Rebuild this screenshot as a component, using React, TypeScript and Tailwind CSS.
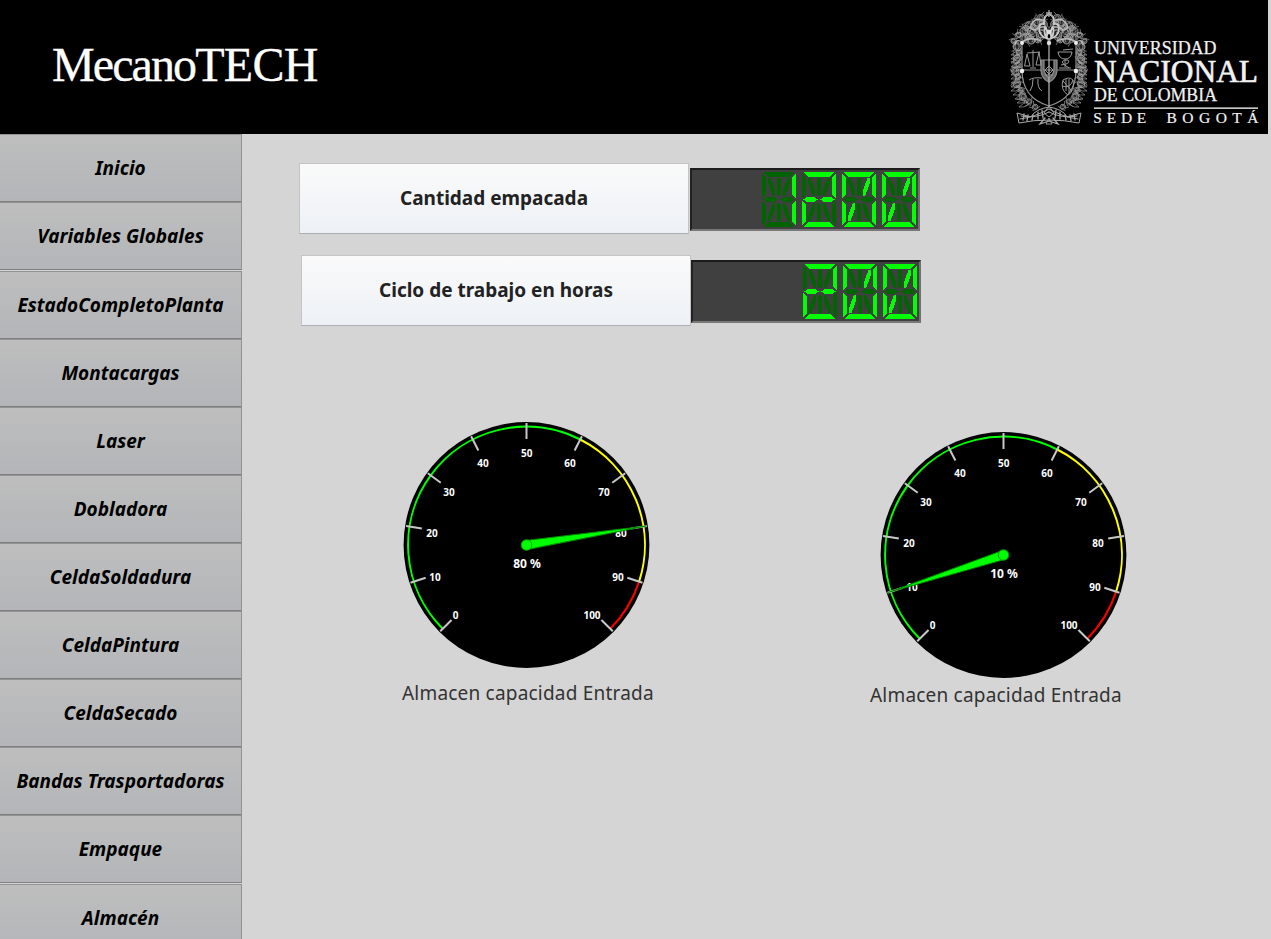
import React from 'react';

const sans = "font-['Noto_Sans','Open_Sans',sans-serif]";

const menu = [
  { label: 'Inicio', gap: false },
  { label: 'Variables Globales', gap: false },
  { label: 'EstadoCompletoPlanta', gap: true },
  { label: 'Montacargas', gap: false },
  { label: 'Laser', gap: false },
  { label: 'Dobladora', gap: false },
  { label: 'CeldaSoldadura', gap: false },
  { label: 'CeldaPintura', gap: false },
  { label: 'CeldaSecado', gap: false },
  { label: 'Bandas Trasportadoras', gap: false },
  { label: 'Empaque', gap: false },
  { label: 'Almacén', gap: true },
];

/* Sixteen-segment style digit shapes on a 34 x 55 cell */
const segments: Record<string, string> = {
  top: '2,0 32,0 28,4.6 6,4.6',
  bottom: '6,50.4 28,50.4 32,55 2,55',
  leftUp: '0,1.3 4.4,6 4.4,22.5 0,26',
  leftDown: '0,29 4.4,32.5 4.4,49 0,53.7',
  rightUp: '34,1.3 29.6,6 29.6,22.5 34,26',
  rightDown: '34,29 29.6,32.5 29.6,49 34,53.7',
  midLeft: '1.2,27.5 5,25 12,25 15.6,27.5 12,30 5,30',
  midRight: '18.4,27.5 22,25 29,25 32.8,27.5 29,30 22,30',
  centerUp: '14.7,6 19.3,6 19.3,22 17,24.8 14.7,22',
  centerDown: '14.7,33 17,30.2 19.3,33 19.3,49 14.7,49',
  diagUL: '6,6 8.6,6 13,18.5 13,24 10.8,24 6,11',
  diagUR: '28,6 25.4,6 21,18.5 21,24 23.2,24 28,11',
  diagLL: '6,49 8.6,49 13,36.5 13,31 10.8,31 6,44',
  diagLR: '28,49 25.4,49 21,36.5 21,31 23.2,31 28,44',
};

const lit: Record<string, string[]> = {
  '0': ['top', 'bottom', 'leftUp', 'leftDown', 'rightUp', 'rightDown', 'diagUR', 'diagLL'],
  '1': ['rightUp', 'rightDown'],
  '2': ['top', 'rightUp', 'midLeft', 'midRight', 'leftDown', 'bottom'],
};

function Digit({ value }: { value: string }) {
  const on = lit[value];
  return (
    <svg width="34" height="55" viewBox="0 0 34 55" shapeRendering="crispEdges" aria-label={value}>
      {Object.keys(segments).map((k) => (
        <polygon key={k} points={segments[k]} fill={on.includes(k) ? '#00ff00' : '#006400'} />
      ))}
    </svg>
  );
}

function Reading({ label, value, flush = false }: { label: string; value: string; flush?: boolean }) {
  return (
    <div className="flex h-[71px] items-start">
      <div className={`${sans} flex h-[71px] w-[390px] items-center justify-center border border-[#c4c4c4] border-b-[#abafb5] bg-linear-to-b from-[#fafafa] to-[#edf1f6] text-[19px] font-bold text-[#222222]`}>
        {label}
      </div>
      <div className={`${flush ? '' : 'ml-px'} mt-[5px] flex h-[63px] w-[230px] justify-end gap-[6px] border-2 border-t-[#1c1c1c] border-r-[#707070] border-b-[#787878] border-l-[#222222] bg-[#404040] pt-[2px] pr-[2px]`}>
        {value.split('').map((d, i) => (
          <Digit key={i} value={d} />
        ))}
      </div>
    </div>
  );
}

const gaugeLabels: [number, number, number][] = [
  [0, -71, 70], [10, -91.5, 32], [20, -94.5, -12], [30, -77.5, -53], [40, -43.5, -82], [50, 0.3, -92],
  [60, 43.5, -82], [70, 77.5, -53], [80, 94.5, -12], [90, 91.5, 32], [100, 65.5, 70],
];

function polar(v: number, r: number): [number, number] {
  const a = ((-135 + v * 2.7) * Math.PI) / 180;
  return [r * Math.sin(a), -r * Math.cos(a)];
}

function arc(from: number, to: number, r: number) {
  const [x1, y1] = polar(from, r);
  const [x2, y2] = polar(to, r);
  return `M${x1} ${y1}A${r} ${r} 0 ${(to - from) * 2.7 > 180 ? 1 : 0} 1 ${x2} ${y2}`;
}

function Gauge({ value }: { value: number }) {
  return (
    <svg width="247" height="246" viewBox="-123.5 -123 247 246" className={`${sans} block font-bold`}>
      <circle r="122.9" fill="#000" />
      <g fill="none" strokeWidth="2">
        <path d={arc(0, 60, 118.4)} stroke="#00ff00" />
        <path d={arc(60, 90, 118.4)} stroke="#ffff00" />
        <path d={arc(90, 100, 118.4)} stroke="#ff0000" />
      </g>
      {gaugeLabels.map(([v, x, y]) => {
        const a = polar(v, 122);
        const b = polar(v, 106);
        return (
          <g key={v}>
            <line x1={a[0]} y1={a[1]} x2={b[0]} y2={b[1]} stroke="#c8c8c8" strokeWidth="2" />
            <text x={x} y={y + 4} fontSize="10" textAnchor="middle" fill="#fff">{v}</text>
          </g>
        );
      })}
      <g transform={`rotate(${-135 + value * 2.7})`}>
        <path d="M-4.6 0L0 -121.5L4.6 0Z" fill="#00ff00" stroke="#008c00" strokeWidth="1" />
      </g>
      <circle r="5.3" fill="#00ff00" stroke="#009600" strokeWidth="1" />
      <text x="0.5" y="22.7" fontSize="12" textAnchor="middle" fill="#fff">{value} %</text>
    </svg>
  );
}

/* Ornamental leaf scrolls for one side of the crest */
const scrolls: [number, number, number][] = [
  [36, 18, 4], [31, 22, 4], [38, 25, 5], [24, 25, 4], [19, 31, 4], [27, 32, 5], [36, 35, 5], [13, 35, 3],
  [19, 38, 4], [26, 40, 4], [33, 40, 3], [9, 41, 3], [12, 47, 4], [14, 53, 3], [12, 59, 4], [13, 65, 3],
  [10, 71, 4], [13, 77, 3], [12, 84, 4], [16, 90, 3], [18, 97, 4], [24, 102, 3], [30, 107, 3], [21, 28, 3],
  [30, 28, 3], [23, 36, 3],
];

function CrestHalf() {
  return (
    <g fill="none" stroke="#a8a8a8" strokeWidth="0.9" strokeLinecap="round">
      {scrolls.map(([x, y, r], i) => (
        <g key={i} transform={`translate(${x} ${y}) rotate(${i * 47})`}>
          <circle r={r} fill="#8a8a8a" fillOpacity="0.28" stroke="none" />
          <path d={`M${-r} 0C${-r} ${-r * 1.3} ${r} ${-r} ${r} 0S${-r / 2} ${r} ${-r / 2} 0S${r / 2} ${-r / 2} ${r / 2} 0`} opacity="0.85" />
          <path d={`M${-r - 1} 1Q0 ${r + 1} ${r + 1} ${r}M${-r} -2L${-r - 1} -4M1 ${-r}L3 ${-r - 2}`} opacity="0.65" />
        </g>
      ))}
      {Array.from({ length: 14 }, (_, i) => (
        <path key={i} d={`M${15 + Math.max(0, i - 9) * 2} ${50 + i * 4}q-4 0 -9 5q5 1 9 -2`} opacity="0.7" />
      ))}
      <path d="M17 42V70Q17 98 44 106" stroke="#929292" strokeWidth="1.2" />
      <path d="M44 70H17" stroke="#8b8b8b" strokeWidth="1.2" />
      <path d="M44 60H36V71Q37 79 44 82L44 78Q40 75 39 70V60" strokeWidth="1.2" stroke="#909090" fill="#666" />
      <path d="M44 14Q38 16 39 24Q34 23 34 29Q35 37 43 39Q38 34 40 27Q43 30 42 36" strokeWidth="1.8" stroke="#cccccc" />
      <path d="M40 21Q32 17 28 22Q22 29 30 30Q34 26 40 27M36 41Q25 36 17 42Q11 38 10 45" strokeWidth="1.3" stroke="#bbbbbb" />
      <path d="M44 107Q30 109 26 117L12 113L14 123Q28 120 44 120M16 116Q31 119 44 112M15 119Q30 117 44 109" stroke="#aaaaaa" strokeWidth="1" />
      <path d="M19 114l-1 6M23 115l-1 6M28 115l-1 5M33 112l0 7M37 110l1 8M40 118l-5 6l9 -3" strokeWidth="1.3" />
      <circle cx="17" cy="43" r="2" fill="#eee" stroke="none" />
      <circle cx="17" cy="71" r="2.3" fill="#eee" stroke="none" />
    </g>
  );
}

function Crest() {
  return (
    <g>
      <CrestHalf />
      <g transform="translate(88 0) scale(-1 1)"><CrestHalf /></g>
      <path d="M44 10v7M41 13h6M40 17q4 -5 8 0M44 39v68" stroke="#aaa" strokeWidth="1.3" fill="none" />
      <circle cx="44" cy="32" r="2.4" fill="#ddd" />
      <circle cx="44" cy="43" r="2.2" fill="#ddd" />
      <g fill="none" stroke="#9a9a9a" strokeWidth="1">
        <path d="M28 50V67M22 53L35 52M22 54L19.5 66M22 54L25 66M19.5 66H25M34 52L31 65M34 52L36 65M31 65H36M25 68H31" />
        <path d="M53 52H67Q66 59 60 59Q54 59 53 52M60 59V67M54 68H66M56 65Q66 64 63 60Q59 59 57 62Q59 65 64 68M58 50L68 49" />
        <path d="M24 80Q28 77 37 78M28 79Q28 87 25 91M33 79Q32 88 37 91" />
        <path d="M58 80Q64 76 68 80Q70 91 63 95Q55 90 58 80M61 79V91M64 79V93M58 81L67 91M57 86Q65 89 68 80" />
        <path d="M44 66l-4 4l4 4l4 -4zM40 75h8M44 106l-5 7l5 4l5 -4zM44 118l-3 6h6z" />
      </g>
    </g>
  );
}

function UniversityLogo() {
  return (
    <svg width="263" height="134" viewBox="0 0 263 134" className="block font-['Liberation_Serif',serif]" fill="#f2f2f2">
      <Crest />
      <g stroke="#f2f2f2" strokeWidth="0.25">
        <text x="89" y="53.7" fontSize="19" textLength="122.5" lengthAdjust="spacingAndGlyphs">UNIVERSIDAD</text>
        <text x="89" y="81.8" fontSize="31" textLength="164" lengthAdjust="spacingAndGlyphs" strokeWidth="0.6">NACIONAL</text>
        <text x="89" y="100.7" fontSize="18" textLength="123" lengthAdjust="spacingAndGlyphs">DE COLOMBIA</text>
      </g>
      <rect x="89" y="107.4" width="164" height="1.5" fill="#ddd" />
      <text x="88.3" y="123.3" fontSize="15.5" textLength="53" lengthAdjust="spacing" stroke="#f2f2f2" strokeWidth="0.2">SEDE</text>
      <text x="161.5" y="123.3" fontSize="15.5" textLength="92" lengthAdjust="spacing" stroke="#f2f2f2" strokeWidth="0.2">BOGOTÁ</text>
    </svg>
  );
}

export default function App() {
  return (
    <div className="flex h-[939px] w-[1271px] flex-col overflow-hidden bg-[#d5d5d5]">
      <header className="flex h-[134px] w-[1268px] shrink-0 items-start justify-between bg-black">
        <h1 className="pt-[38px] pl-[52px] font-['Liberation_Serif',serif] text-[48px] leading-[54px] tracking-[-1.9px] text-white [-webkit-text-stroke:0.3px_white]">
          Mecano<span className="tracking-[-0.7px]">TECH</span>
        </h1>
        <UniversityLogo />
      </header>
      <div className="flex min-h-0 flex-1">
        <nav className="flex w-[242px] shrink-0 flex-col">
          {menu.map((m) => (
            <button
              key={m.label}
              className={`${sans} flex h-[68px] w-[242px] shrink-0 items-center justify-center border-y border-r border-t-[#929292] border-r-[#929292] border-b-[#808080] bg-linear-to-b from-[#bebebe] to-[#b3b5b8] pt-px text-[19px] font-bold text-black italic ${m.gap ? 'mt-px' : ''}`}
            >
              {m.label}
            </button>
          ))}
        </nav>
        <main className="flex flex-col">
          <section className="flex flex-col gap-[21px] pt-[29px] pl-[57px]">
            <Reading label="Cantidad empacada" value="1200" />
            <div className="pl-[2px]">
              <Reading label="Ciclo de trabajo en horas" value="200" flush />
            </div>
          </section>
          <section className={`${sans} flex pt-[96px] text-[19px] leading-[26px] tracking-[0.2px] text-[#333333]`}>
            <figure className="ml-[158px] flex w-[254px] flex-col">
              <div className="pl-[3px] tracking-normal"><Gauge value={80} /></div>
              <figcaption className="mt-[12px] pl-[2px] whitespace-nowrap">Almacen capacidad Entrada</figcaption>
            </figure>
            <figure className="mt-[10px] ml-[214px] flex w-[260px] flex-col">
              <div className="pl-[12px] tracking-normal"><Gauge value={10} /></div>
              <figcaption className="mt-[4px] pl-[2px] whitespace-nowrap">Almacen capacidad Entrada</figcaption>
            </figure>
          </section>
        </main>
      </div>
    </div>
  );
}
